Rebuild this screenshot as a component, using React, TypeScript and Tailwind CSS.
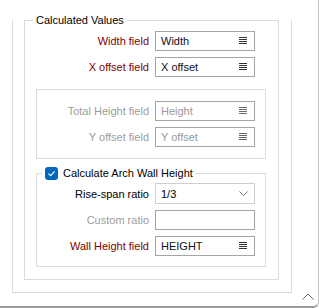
import React from "react";

function ListIcon({ disabled }: { disabled?: boolean }) {
  return (
    <svg width="8" height="8" viewBox="0 0 8 8" className="shrink-0">
      <path
        d="M0 0.5H8M0 2.5H8M0 4.5H8M0 6.5H8"
        stroke={disabled ? "#6a6a6a" : "#333333"}
        strokeWidth="1"
      />
    </svg>
  );
}

function Field({
  value,
  disabled,
  icon,
}: {
  value: string;
  disabled?: boolean;
  icon?: boolean;
}) {
  return (
    <div className="w-[100px] h-[20px] border border-[#a5a5a5] bg-white flex items-center justify-between pl-[5px] pr-[7px]">
      <span className={disabled ? "text-[#9a9a9a]" : "text-[#101020]"}>{value}</span>
      {icon && <ListIcon disabled={disabled} />}
    </div>
  );
}

function Row({
  label,
  labelClass,
  labelWidth,
  children,
  className,
}: {
  label: string;
  labelClass: string;
  labelWidth: string;
  children: React.ReactNode;
  className?: string;
}) {
  return (
    <div className={"flex items-center " + (className ?? "")}>
      <div className={labelWidth + " text-right whitespace-nowrap " + labelClass}>{label}</div>
      <div className="ml-[6px]">{children}</div>
    </div>
  );
}

export default function App() {
  return (
    <div className="w-[319px] h-[308px] bg-white relative overflow-hidden border-r border-b-2 border-r-[#c4c4c4] border-b-[#9a9a9a] rounded-br-[6px] font-['Liberation_Sans',Arial,sans-serif] text-[11px] leading-[14px] text-black">
      <div className="ml-[12px] w-[280px] border-x border-b border-[#dadada] pl-[11px] pr-[12px] pb-[12px]">
        {/* Calculated Values group */}
        <div className="relative mt-[20px] border border-[#dadada] pt-[10px] pl-[11px] pr-[12px] pb-[12px]">
          <span className="absolute left-[8px] -top-[8px] bg-white px-[3px] leading-[14px] whitespace-nowrap">
            Calculated Values
          </span>
          <Row label="Width field" labelClass="text-[#800000]" labelWidth="w-[113px]">
            <Field value="Width" icon />
          </Row>
          <Row label="X offset field" labelClass="text-[#800000]" labelWidth="w-[113px]" className="mt-[6px]">
            <Field value="X offset" icon />
          </Row>

          {/* disabled group */}
          <div className="mt-[12px] border border-[#dadada] pt-[11px] pb-[11px]">
            <Row label="Total Height field" labelClass="text-[#9d9d9d]" labelWidth="w-[112px]">
              <Field value="Height" icon disabled />
            </Row>
            <Row label="Y offset field" labelClass="text-[#9d9d9d]" labelWidth="w-[112px]" className="mt-[6px]">
              <Field value="Y offset" icon disabled />
            </Row>
          </div>

          {/* Arch group */}
          <div className="relative mt-[14px] border border-[#dadada] pt-[9px] pb-[10px]">
            <span className="absolute left-[5px] -top-[8px] bg-white px-[3px] h-[14px] flex items-center whitespace-nowrap">
              <span className="w-[13px] h-[13px] rounded-[3px] bg-[#0067c0] flex items-center justify-center">
                <svg width="9" height="9" viewBox="0 0 9 9">
                  <path d="M1.5 4.6L3.6 6.6L7.6 2.4" fill="none" stroke="#ffffff" strokeWidth="1.2" />
                </svg>
              </span>
              <span className="ml-[5px]">Calculate Arch Wall Height</span>
            </span>
            <Row label="Rise-span ratio" labelClass="text-black" labelWidth="w-[112px]">
              <div className="w-[100px] h-[21px] border border-[#cfcfcf] bg-white flex items-center justify-between pl-[5px] pr-[6px]">
                <span className="text-black">1/3</span>
                <svg width="9" height="5" viewBox="0 0 9 5">
                  <path d="M0.5 0.5L4.5 4.5L8.5 0.5" fill="none" stroke="#7a7a7a" strokeWidth="1" />
                </svg>
              </div>
            </Row>
            <Row label="Custom ratio" labelClass="text-[#9d9d9d]" labelWidth="w-[112px]" className="mt-[6px]">
              <div className="w-[100px] h-[20px] border border-[#a5a5a5] bg-white" />
            </Row>
            <Row label="Wall Height field" labelClass="text-[#800000]" labelWidth="w-[112px]" className="mt-[6px]">
              <Field value="HEIGHT" icon />
            </Row>
          </div>
        </div>
      </div>

      <svg
        className="absolute left-[302px] top-[293px]"
        width="12"
        height="7"
        viewBox="0 0 12 7"
      >
        <path d="M0.5 6.5L6 1L11.5 6.5" fill="none" stroke="#6e6e6e" strokeWidth="1" />
      </svg>
    </div>
  );
}
